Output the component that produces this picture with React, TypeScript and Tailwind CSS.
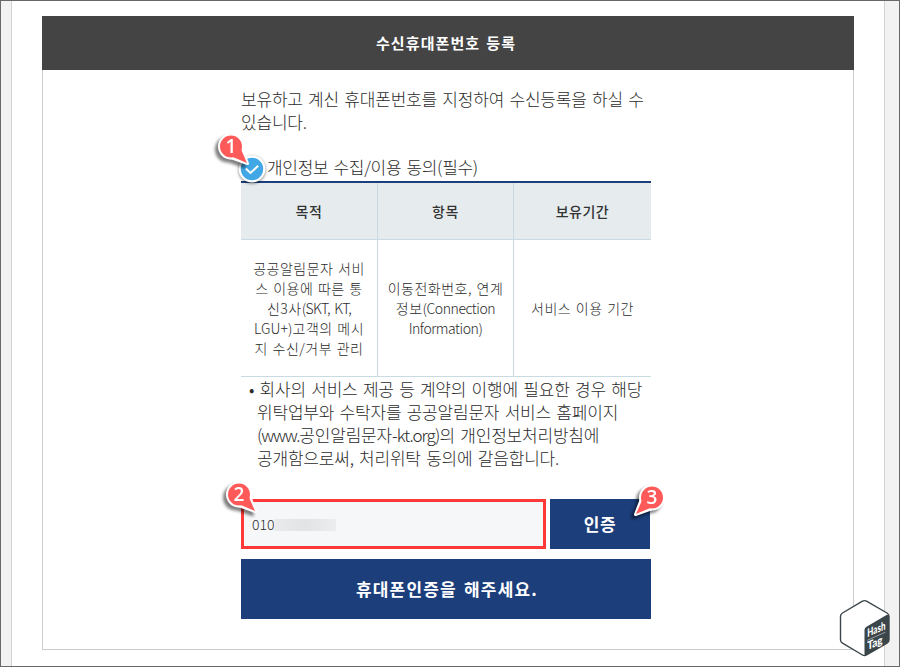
import type { ReactNode } from 'react';

interface MarkerProps {
    label: string;
    flip?: boolean;
    className: string;
}

// Numbered callout, the tail points down-right (or down-left when flipped)
function Marker({ label, flip = false, className }: MarkerProps) {
    return (
        <svg
            viewBox="0 0 40 40"
            className={`absolute z-20 h-10 w-10 overflow-visible drop-shadow-[-3px_3px_1.5px_rgba(0,0,0,0.5)] ${className}`}
        >
            <g transform={flip ? 'translate(40 0) scale(-1 1)' : undefined}>
                <path d="M11 24.5 L30.5 31.5 L23 12 Z" fill="#ff5a5a" stroke="#fff" strokeWidth="3" strokeLinejoin="round" />
                <circle cx="14" cy="14.5" r="12" fill="#ff5a5a" stroke="#fff" strokeWidth="2" />
                <path d="M14 24.2 L30 31 L23 15 Z" fill="#ff5a5a" />
            </g>
            <text
                x={flip ? 26 : 14}
                y="21"
                textAnchor="middle"
                fill="#fff"
                className="font-['Open_Sans',sans-serif] text-[19px] font-semibold"
            >
                {label}
            </text>
        </svg>
    );
}

function CheckBadge() {
    return (
        <svg viewBox="0 0 28 28" className="h-7 w-7 overflow-visible drop-shadow-[0_1px_1.5px_rgba(0,0,0,0.5)]">
            <circle cx="14" cy="14" r="12.3" fill="#41a8e5" stroke="#fff" strokeWidth="2.2" />
            <path d="M7.8 13.6 L12.5 18 L20.2 10.8" fill="none" stroke="#fff" strokeWidth="2" />
        </svg>
    );
}

function HashTagLogo() {
    return (
        <svg viewBox="0 0 52 60" className="absolute top-[597px] left-[837px] h-[60px] w-[52px] overflow-visible">
            <path
                d="M24.5 3.2 Q26.5 2 28.5 3.2 L49 15 Q51 16.2 51 18.2 L51 42 Q51 44 49 45.2 L28.5 57 Q26.5 58.2 24.5 57 L4.5 45.2 Q2.5 44 2.5 42 L2.5 18.2 Q2.5 16.2 4.5 15 Z"
                fill="#fff"
                stroke="#3b464a"
                strokeWidth="1.4"
            />
            <path d="M26.5 32 Q26.5 29.8 28.5 28.7 L48.5 17 Q51 15.8 51 18.5 L51 42 Q51 44 49 45.2 L28.5 57.3 L26.5 57.6 Z" fill="#3b464a" />
            <g fill="#fff" className="font-['Lato',sans-serif] font-black">
                <text transform="matrix(0.93 -0.42 0 1 29.3 39.3)" fontSize="11.5" textLength="19.5" lengthAdjust="spacingAndGlyphs">Hash</text>
                <text transform="matrix(0.93 -0.42 0 1 29.3 52.3)" fontSize="11.5" textLength="16.5" lengthAdjust="spacingAndGlyphs">Tag</text>
            </g>
            <path d="M29.3 42.3 L47.5 34.2" stroke="#aeb4b6" strokeWidth="0.8" />
        </svg>
    );
}

function Cell({ children, last = false }: { children: ReactNode; last?: boolean }) {
    return (
        <div
            className={`flex items-center justify-center border-b border-[#c9dbe2] text-center whitespace-nowrap ${last ? '' : 'border-r'}`}
        >
            <div>{children}</div>
        </div>
    );
}

// Latin runs are set tighter than the Hangul around them
function Latin({ children }: { children: ReactNode }) {
    return <span className="tracking-[-0.45px]">{children}</span>;
}

export default function App() {
    return (
        <div className="relative flex h-[667px] w-[900px] overflow-hidden border border-[#696768] bg-[#f2f2f2] pl-[10px] pr-[14px] font-['Noto_Sans_CJK_KR',sans-serif] font-light text-[#2b2b2b]">
            <div className="flex-1 border-x border-[#d2d2d2] bg-white px-[30px] pt-[15px]">
                <div className="flex h-[634px] flex-col border border-t-0 border-[#cbcbcb]">
                    <h1 className="-mx-px flex h-[54px] shrink-0 items-center justify-center bg-[#444] pt-px pr-[4px] text-[15px] font-bold tracking-[1.1px] text-white [word-spacing:1.5px]">
                        수신휴대폰번호 등록
                    </h1>

                    <div className="ml-[198px] w-[410px] whitespace-nowrap">
                        <p className="mt-[17px] text-[17px] leading-[23px] tracking-[-0.2px] [word-spacing:1.8px]">
                            보유하고 계신 휴대폰번호를 지정하여 수신등록을 하실 수
                            <br />
                            있습니다.
                        </p>

                        <div className="relative mt-[21px] flex h-[27px] items-start pl-[26px]">
                            <div className="absolute top-[1px] left-[-3px] z-10">
                                <CheckBadge />
                            </div>
                            <span className="text-[17px] leading-[25px] tracking-[-0.3px] [word-spacing:1.7px]">
                                개인정보 수집/이용 동의(필수)
                            </span>
                        </div>

                        <div className="border-t-2 border-[#1c3e7b] text-[14px] tracking-[0.5px]">
                            <div className="grid h-[57px] grid-cols-[137px_136px_137px] bg-[#e6ecee] font-medium text-[#333]">
                                <Cell>목적</Cell>
                                <Cell>항목</Cell>
                                <Cell last>보유기간</Cell>
                            </div>
                            <div className="grid h-[137px] grid-cols-[137px_136px_137px] leading-[20px] [word-spacing:1px]">
                                <Cell>
                                    공공알림문자 서비
                                    <br />
                                    스 이용에 따른 통
                                    <br />
                                    신3사<span className="tracking-[-0.6px] [word-spacing:2px]">(SKT, KT,</span>
                                    <br />
                                    <span className="tracking-[0.1px]">LGU+)</span>고객의 메시
                                    <br />
                                    지 수신/거부 관리
                                </Cell>
                                <Cell>
                                    이동전화번호, 연계
                                    <br />
                                    정보<Latin>(Connection</Latin>
                                    <br />
                                    <Latin>Information)</Latin>
                                </Cell>
                                <Cell last>서비스 이용 기간</Cell>
                            </div>
                        </div>

                        <div className="flex pl-[8px] text-[17px] leading-[23px] tracking-[-0.2px] [word-spacing:1.8px]">
                            <p className="pl-[8px] -indent-[8px]">
                                • 회사의 서비스 제공 등 계약의 이행에 필요한 경우 해당
                                <br />
                                <span className="inline-block indent-0">위탁업부와 수탁자를 공공알림문자 서비스 홈페이지</span>
                                <br />
                                <span className="inline-block indent-0">
                                    <span className="tracking-[-1.2px]">(www.</span>공인알림문자
                                    <span className="tracking-[-1px]">-kt.org)</span>의 개인정보처리방침에
                                </span>
                                <br />
                                <span className="inline-block indent-0">공개함으로써, 처리위탁 동의에 갈음합니다.</span>
                            </p>
                        </div>

                        <div className="mt-[30px] flex gap-[4px]">
                            <div className="flex h-[50px] w-[305px] items-center border-[3px] border-[#ff3838] bg-[#f5f7f9] pl-[8px] text-[14px]">
                                <span>010</span>
                                <span className="mt-0.5 h-3 w-[62px] bg-linear-to-r from-[#e9ebed] via-[#e1e3e5] to-[#ebedef]" />
                            </div>
                            <button className="h-[50px] w-[100px] bg-[#1c3e7b] pb-px text-[17px] font-bold tracking-[0.5px] text-white">
                                인증
                            </button>
                        </div>
                        <button className="mt-[10px] h-[60px] w-full bg-[#1c3e7b] pl-[2px] text-[17px] font-bold tracking-[1.2px] text-white [word-spacing:2px]">
                            휴대폰인증을 해주세요.
                        </button>
                    </div>
                </div>
            </div>

            <Marker label="1" className="top-[131px] left-[216px]" />
            <Marker label="2" className="top-[479px] left-[224px]" />
            <Marker label="3" flip className="top-[482px] left-[625px]" />
            <HashTagLogo />
        </div>
    );
}
